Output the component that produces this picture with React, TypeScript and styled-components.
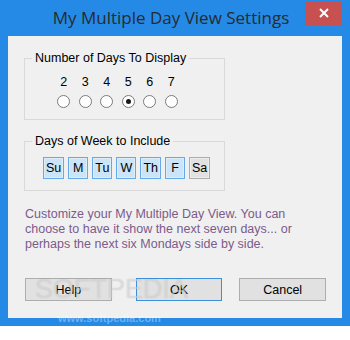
import React, { useState } from "react";
import styled, { createGlobalStyle } from "styled-components";

const GlobalStyle = createGlobalStyle`
  html, body {
    margin: 0;
    padding: 0;
    background: #ffffff;
  }
  body {
    font-family: "Liberation Sans", Arial, sans-serif;
  }
`;

const days = [
  { label: "Su", on: true },
  { label: "M", on: true },
  { label: "Tu", on: true },
  { label: "W", on: true },
  { label: "Th", on: true },
  { label: "F", on: true },
  { label: "Sa", on: false },
];

const counts = [2, 3, 4, 5, 6, 7];

const Window = styled.div`
  position: relative;
  width: 350px;
  height: 326px;
  box-sizing: border-box;
  background: #258ae6;
  display: flex;
  flex-direction: column;
  padding: 0 8px 8px 8px;
`;

const TitleBar = styled.div`
  height: 36px;
  margin: 0 -8px;
  padding-right: 8px;
  display: grid;
  grid-template-columns: 1fr auto 1fr;
  align-items: start;
`;

const Title = styled.div`
  grid-column: 2;
  font-family: "Open Sans", "Noto Sans", sans-serif;
  font-size: 17px;
  line-height: 22px;
  padding-top: 7px;
  color: #262a2e;
  white-space: nowrap;
`;

const CloseButton = styled.button`
  grid-column: 3;
  justify-self: end;
  margin-top: 1px;
  width: 37px;
  height: 24px;
  border: none;
  padding: 0;
  background: #c75050;
  display: flex;
  align-items: center;
  justify-content: center;
  cursor: pointer;
`;

const Content = styled.div`
  flex: 1;
  background: #f0f0f0;
  display: flex;
  flex-direction: column;
  padding: 15px 16px 17px 16px;
  font-size: 12.5px;
  color: #000;
`;

const Group = styled.fieldset<{ $top?: number }>`
  margin: ${(p) => p.$top ?? 0}px 0 0 0;
  padding: 0;
  width: 201px;
  box-sizing: border-box;
  border: 1px solid #d9d9d9;
  min-width: 0;
`;

const Legend = styled.legend`
  margin-left: 7px;
  padding: 0 3px;
  line-height: 14px;
  font-size: 12.5px;
  color: #000;
`;

const CountGrid = styled.div`
  display: grid;
  grid-template-columns: repeat(6, 21.5px);
  grid-template-rows: 14px 13px;
  row-gap: 6px;
  margin: 10px 0 11px 28px;
  justify-items: center;
  align-items: center;
`;

const Digit = styled.span`
  line-height: 14px;
`;

const Radio = styled.span<{ $checked: boolean }>`
  width: 13px;
  height: 13px;
  box-sizing: border-box;
  border-radius: 50%;
  border: 1px solid #7b7b7b;
  background: #ffffff;
  display: flex;
  align-items: center;
  justify-content: center;
  cursor: pointer;
  &::after {
    content: "";
    display: ${(p) => (p.$checked ? "block" : "none")};
    width: 5px;
    height: 5px;
    border-radius: 50%;
    background: #1a1a1a;
  }
`;

const DayRow = styled.div`
  display: flex;
  gap: 4px;
  margin: 9px 0 11px 18px;
`;

const DayToggle = styled.span<{ $on: boolean }>`
  min-width: 20px;
  height: 22px;
  box-sizing: border-box;
  padding: 0 2px;
  display: flex;
  align-items: center;
  justify-content: center;
  border: 1px solid ${(p) => (p.$on ? "#66a9e9" : "#adadad")};
  background: ${(p) => (p.$on ? "#cce4f7" : "#e1e1e1")};
  box-shadow: inset 0 0 0 1px ${(p) => (p.$on ? "#ddeefb" : "#ececec")};
  cursor: pointer;
`;

const Description = styled.p`
  margin: 16px 0 0 1px;
  line-height: 15px;
  color: #7b5b8b;
`;

const ButtonRow = styled.div`
  margin-top: auto;
  display: flex;
  padding-left: 1px;
`;

const Button = styled.button<{ $default?: boolean; $gap?: number }>`
  margin-left: ${(p) => p.$gap ?? 0}px;
  width: 87px;
  height: 23px;
  box-sizing: border-box;
  font-family: "Liberation Sans", Arial, sans-serif;
  font-size: 12.5px;
  color: #000;
  background: #e1e1e1;
  border: 1px solid ${(p) => (p.$default ? "#3c8fdc" : "#adadad")};
  padding: 0;
  cursor: pointer;
`;

const Watermark = styled.div`
  position: absolute;
  left: 35px;
  top: 276px;
  font-family: "Liberation Sans", Arial, sans-serif;
  font-size: 27px;
  line-height: 1;
  color: rgba(255, 255, 255, 0.4);
  text-shadow: 0 0 1px rgba(110, 110, 110, 0.35);
  pointer-events: none;
`;

const WatermarkUrl = styled.div`
  position: absolute;
  left: 58px;
  top: 312px;
  font-family: "Liberation Sans", Arial, sans-serif;
  font-size: 11px;
  font-weight: bold;
  color: rgba(255, 255, 255, 0.35);
  pointer-events: none;
`;

export default function App() {
  const [count, setCount] = useState(5);
  const [selected, setSelected] = useState(days.map((d) => d.on));

  return (
    <>
      <GlobalStyle />
      <Window>
        <TitleBar>
          <Title>My Multiple Day View Settings</Title>
          <CloseButton aria-label="Close">
            <svg width="10" height="10" viewBox="0 0 10 10">
              <path d="M1 1 L9 9 M9 1 L1 9" stroke="#fff" strokeWidth="2" />
            </svg>
          </CloseButton>
        </TitleBar>
        <Content>
          <Group>
            <Legend>Number of Days To Display</Legend>
            <CountGrid>
              {counts.map((n) => (
                <Digit key={`d${n}`}>{n}</Digit>
              ))}
              {counts.map((n) => (
                <Radio key={`r${n}`} $checked={count === n} onClick={() => setCount(n)} />
              ))}
            </CountGrid>
          </Group>
          <Group $top={14}>
            <Legend>Days of Week to Include</Legend>
            <DayRow>
              {days.map((d, i) => (
                <DayToggle
                  key={d.label}
                  $on={selected[i]}
                  onClick={() => setSelected((s) => s.map((v, j) => (j === i ? !v : v)))}
                >
                  {d.label}
                </DayToggle>
              ))}
            </DayRow>
          </Group>
          <Description>
            Customize your My Multiple Day View. You can
            <br />
            choose to have it show the next seven days... or
            <br />
            perhaps the next six Mondays side by side.
          </Description>
          <ButtonRow>
            <Button>Help</Button>
            <Button $default $gap={24}>
              OK
            </Button>
            <Button $gap={17}>Cancel</Button>
          </ButtonRow>
        </Content>
        <Watermark>SOFTPEDIA</Watermark>
        <WatermarkUrl>www.softpedia.com</WatermarkUrl>
      </Window>
    </>
  );
}
